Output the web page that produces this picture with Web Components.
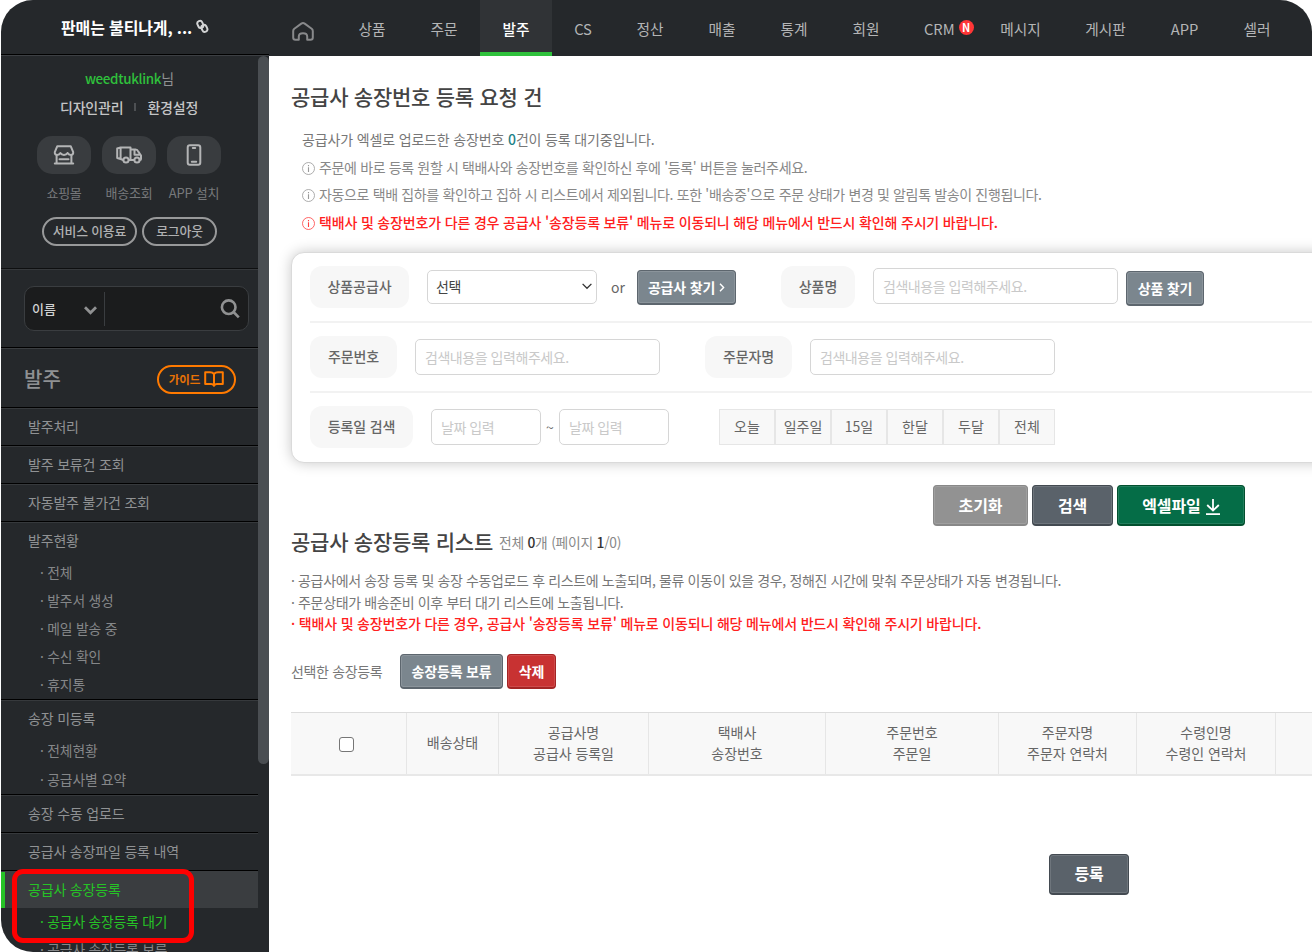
<!DOCTYPE html>
<html lang="ko">
<head>
<meta charset="utf-8">
<title>공급사 송장등록 대기</title>
<style>
  html, body { margin: 0; height: 952px; overflow: hidden; background: #fff; }
  body { font: 14px/20px "Noto Sans CJK KR", "Noto Sans KR", sans-serif; color: #666; }
</style>
</head>
<body>
<admin-shell>
  <side-header slot="brand">판매는 불티나게, ...</side-header>
  <top-nav slot="nav">
    <nav-item style="width:72px">상품</nav-item>
    <nav-item style="width:72px">주문</nav-item>
    <nav-item style="width:72px" active>발주</nav-item>
    <nav-item style="width:62px">CS</nav-item>
    <nav-item style="width:72px">정산</nav-item>
    <nav-item style="width:72px">매출</nav-item>
    <nav-item style="width:72px">통계</nav-item>
    <nav-item style="width:72px">회원</nav-item>
    <nav-item style="width:76px" badge="N">CRM</nav-item>
    <nav-item style="width:85px">메시지</nav-item>
    <nav-item style="width:85px">게시판</nav-item>
    <nav-item style="width:73px">APP</nav-item>
    <nav-item style="width:72px">셀러</nav-item>
  </top-nav>

  <side-bar slot="side">
    <user-panel slot="user" name="weedtuklink"></user-panel>
    <side-search slot="search">이름</side-search>
    <side-title slot="title">발주</side-title>
    <menu-group label="발주처리"></menu-group>
    <menu-group label="발주 보류건 조회"></menu-group>
    <menu-group label="자동발주 불가건 조회"></menu-group>
    <menu-group label="발주현황">
      <menu-link>전체</menu-link>
      <menu-link>발주서 생성</menu-link>
      <menu-link>메일 발송 중</menu-link>
      <menu-link>수신 확인</menu-link>
      <menu-link>휴지통</menu-link>
    </menu-group>
    <menu-group label="송장 미등록" style="--row:28.5px">
      <menu-link>전체현황</menu-link>
      <menu-link>공급사별 요약</menu-link>
    </menu-group>
    <menu-group label="송장 수동 업로드"></menu-group>
    <menu-group label="공급사 송장파일 등록 내역"></menu-group>
    <menu-group label="공급사 송장등록" active>
      <menu-link active>공급사 송장등록 대기</menu-link>
      <menu-link>공급사 송장등록 보류</menu-link>
    </menu-group>
  </side-bar>

  <request-intro></request-intro>
  <search-panel></search-panel>
  <list-section></list-section>
</admin-shell>

<script>
// small base class: every element renders its own html() into an open root
class BaseElement extends HTMLElement {
  connectedCallback() {
    if (this.shadowRoot) return;
    this.attachShadow({ mode: 'open' });
    this.shadowRoot.innerHTML = this.html();
  }
  html() { return '<slot></slot>'; }
}

class AdminShell extends BaseElement {
  html() {
    return `
      <style>
        :host { display: grid; grid-template: 56px 896px / 268px 1043px; width: 1311px; height: 952px;
          margin-left: 1px; overflow: hidden; position: relative; border-radius: 32px 32px 0 32px; background: #fff; }
        main { padding: 0 0 0 22px; overflow: hidden; min-width: 0; }
        .mark { position: absolute; left: 11px; top: 869px; width: 172px; height: 64px;
          border: 5px solid #fe0000; border-radius: 11px; }
      </style>
      <slot name="brand"></slot>
      <slot name="nav"></slot>
      <slot name="side"></slot>
      <main><slot></slot></main>
      <div class="mark"></div>
    `;
  }
}

class SideHeader extends BaseElement {
  html() {
    return `
      <style>
        :host { display: flex; box-sizing: border-box; height: 56px; padding: 0 0 2px 60px; align-items: center;
          gap: 4px; background: #25282b; border-bottom: 1px solid #3c3f43; box-shadow: inset 0 -1px #000;
          color: #fff; font-size: 16px; letter-spacing: -.14px; font-weight: 700; white-space: nowrap; }
      </style>
      <span><slot></slot></span>
      <svg width="13" height="15" viewBox="0 0 14 16" fill="none" stroke="#d2d3d4" stroke-width="2.1">
        <rect x="2" y="1.8" width="5.6" height="7.8" rx="2.8" transform="rotate(-25 5 6)"/>
        <rect x="6" y="6" width="5.6" height="7.8" rx="2.8" transform="rotate(-25 9 9.5)"/>
      </svg>
    `;
  }
}

class TopNav extends BaseElement {
  html() {
    return `
      <style>
        :host { display: flex; height: 56px; background: #25282b; }
        .home { width: 67px; display: flex; align-items: center; padding-top: 6px; box-sizing: border-box; padding-left: 23px; }
      </style>
      <div class="home">
        <svg width="22" height="19" viewBox="0 0 22 19" fill="none" stroke="#88898b" stroke-width="2" stroke-linejoin="round">
          <path d="M1.2 9 Q1.2 7.6 2.3 6.7 L9.3 1.6 Q11 .5 12.7 1.6 L19.7 6.7 Q20.8 7.6 20.8 9 V15.6 Q20.8 17.8 18.6 17.8 H15.2 V14.6 Q15.2 11.2 11 11.2 Q6.8 11.2 6.8 14.6 V17.8 H3.4 Q1.2 17.8 1.2 15.6Z"/>
        </svg>
      </div>
      <slot></slot>
    `;
  }
}

class NavItem extends BaseElement {
  html() {
    const badge = this.getAttribute('badge');
    return `
      <style>
        :host { display: flex; box-sizing: border-box; height: 56px; padding-top: 1px; align-items: center; justify-content: center;
          font-size: 14.7px; color: #b4b5b6; white-space: nowrap; }
        :host([active]) { background: #303336; color: #fff; font-weight: 500; border-bottom: 4px solid #2fc13c; padding-top: 5px; }
        :host([badge]) { justify-content: flex-start; padding-left: 22px; }
        b { width: 15px; height: 15px; border-radius: 50%; background: #ff3636; color: #fff; margin: -3px 0 0 4px;
          font: 700 11px/15px "Noto Sans CJK KR", sans-serif; text-align: center; }
      </style>
      <slot></slot>${badge ? `<b>${badge}</b>` : ''}
    `;
  }
}

class SideBar extends BaseElement {
  html() {
    return `
      <style>
        :host { display: grid; grid-template-columns: 257px 11px; height: 896px; background: #25282b; overflow: hidden; color: #909294; }
        .thumb { height: 708px; border-radius: 6px; background: #4a4e52; }
      </style>
      <div>
        <slot name="user"></slot>
        <slot name="search"></slot>
        <slot name="title"></slot>
        <slot></slot>
      </div>
      <div class="thumb"></div>
    `;
  }
}

class UserPanel extends BaseElement {
  html() {
    return `
      <style>
        :host { display: block; box-sizing: border-box; height: 213px; padding-top: 12px; border-bottom: 1px solid #0e0f10; white-space: nowrap; }
        .name { text-align: center; } .name b { font-weight: 500; color: #2fc13c; font-size: 13.4px; letter-spacing: -.32px; }
        .links { display: flex; align-items: center; gap: 11px; padding: 9px 0 0 59px; color: #c4c5c6; letter-spacing: -.2px; font-weight: 500; }
        .links i { width: 2px; height: 8px; background: #4d5053; }
        .tiles { display: flex; gap: 11px; padding: 19px 0 0 36px; font-size: 13px; letter-spacing: -.25px; color: #77797b; }
        .tile { width: 54px; text-align: center; }
        .tile div { height: 38px; border-radius: 15px; background: #393c3f; display: flex; align-items: center; justify-content: center; margin-bottom: 9px; }
        .tile span { margin: 0 -10px; }
        .acts { display: flex; gap: 5px; padding: 14px 0 0 41px; font-size: 12.9px; letter-spacing: -.2px; color: #b0b1b2; font-weight: 500; }
        .acts span { box-sizing: border-box; height: 29px; line-height: 24px; border: 2px solid #98999a; border-radius: 15px; width: 95px; text-align: center; }
        .acts span + span { width: 75px; }
        svg { fill: none; stroke: #b4b5b6; stroke-width: 2; stroke-linejoin: round; stroke-linecap: round; }
      </style>
      <div class="name"><b>${this.getAttribute('name')}</b>님</div>
      <div class="links"><span>디자인관리</span><i></i><span>환경설정</span></div>
      <div class="tiles">
        <div class="tile"><div>
          <svg width="22" height="20" viewBox="0 0 22 20"><path d="M4.3 1.2 H17.7 L20.2 7.2 Q20.4 9.9 17.8 9.9 Q15.5 9.9 14.6 8 Q13.4 9.9 11 9.9 Q8.6 9.9 7.4 8 Q6.5 9.9 4.2 9.9 Q1.6 9.9 1.8 7.2Z M3.6 10.5 V18 M18.4 10.5 V18 M1.8 18.4 H20.2 M6.5 14.2 H15.5"/></svg>
        </div><span>쇼핑몰</span></div>
        <div class="tile"><div>
          <svg width="26" height="18" viewBox="0 0 26 18"><path d="M4.6 1.5 H14.5 V14 H12.8 M7.2 14 L4.6 13 V1.5 L1.2 2.5 V12 L4.6 13 M14.5 3.6 H19.5 Q21.5 3.6 22.3 5.6 L25 9.5 V13 Q25 14 24 14 H23.6 M18 14 H14.5 M18.5 4.5 V8.7 H23.5"/><circle cx="10" cy="14" r="2.6"/><circle cx="21" cy="14" r="2.6"/></svg>
        </div><span>배송조회</span></div>
        <div class="tile"><div>
          <svg width="16" height="22" viewBox="0 0 16 22"><rect x="1.7" y="1.2" width="12.6" height="19.6" rx="2.2"/><path d="M6.8 4 H9.2 M5.8 17.8 H10.2"/></svg>
        </div><span>APP 설치</span></div>
      </div>
      <div class="acts"><span>서비스 이용료</span><span>로그아웃</span></div>
    `;
  }
}

class SideSearch extends BaseElement {
  html() {
    return `
      <style>
        :host { display: block; box-sizing: border-box; height: 79px; border-top: 1px solid #36393c; border-bottom: 1px solid #000; padding: 16px 0 0 23px; }
        .box { box-sizing: border-box; width: 225px; height: 45px; border: 1px solid #3a3d40; border-radius: 10px; background: #1b1c1d;
          display: flex; align-items: center; color: #d0d1d2; font-size: 13px; font-weight: 500; }
        .sel { width: 80px; height: 34px; box-sizing: border-box; padding: 0 7px 0 7px; display: flex; align-items: center;
          justify-content: space-between; border-right: 1px solid #3a3d40; }
        .sel svg { margin-top: 3px; }
        .find { margin-left: auto; margin-right: 8px; }
        svg { display: block; fill: none; stroke: #909192; }
      </style>
      <div class="box">
        <div class="sel"><span><slot></slot></span>
          <svg width="13" height="9" viewBox="0 0 13 9" stroke-width="2.8"><path d="M1 1.3 L6.5 6.8 L12 1.3"/></svg></div>
        <svg class="find" width="20" height="20" viewBox="0 0 20 20" stroke-width="2.6"><circle cx="8.7" cy="8.2" r="6.8"/><path d="M13.5 13 L18.8 18.3"/></svg>
      </div>
    `;
  }
}

class SideTitle extends BaseElement {
  html() {
    return `
      <style>
        :host { display: flex; box-sizing: border-box; height: 60px; border-top: 1px solid #3a3d40; border-bottom: 1px solid #000;
          align-items: center; justify-content: space-between; padding: 2px 22px 0 23px; font-size: 20px; font-weight: 500; color: #8f9193; }
        .guide { box-sizing: border-box; width: 79px; height: 29px; border: 2px solid #ff7a00; border-radius: 15px; display: flex; align-items: center;
          justify-content: center; gap: 4px; padding-bottom: 1px; color: #e87205; font-size: 11.5px; font-weight: 700; }
        svg { margin-top: 1px; }
      </style>
      <span><slot></slot></span>
      <div class="guide">가이드
        <svg width="20" height="16" viewBox="0 0 20 16" fill="none" stroke="#ff7a00" stroke-width="2" stroke-linejoin="round">
          <path d="M10 3 Q8.5 1.3 6 1.3 H1.2 V13 H7 Q9.2 13 10 14.8 Q10.8 13 13 13 H18.8 V1.3 H14 Q11.5 1.3 10 3 V14"/></svg>
      </div>
    `;
  }
}

class MenuGroup extends BaseElement {
  html() {
    return `
      <style>
        :host { display: block; border-top: 1px solid #36393c; border-bottom: 1px solid #000; }
        .label { height: 36px; line-height: 35px; padding-left: 27px; letter-spacing: -.18px; }
        :host([active]) { border-top-color: #3a3d40; }
        :host([active]) .label { background: #3a3d40; color: #26c326; border-left: 4px solid #26c326; padding-left: 23px; }
      </style>
      <div class="label">${this.getAttribute('label')}</div>
      <slot></slot>
    `;
  }
}

class MenuLink extends BaseElement {
  html() {
    return `
      <style>
        :host { display: block; height: var(--row, 28px); line-height: 26px; padding-left: 39px; font-size: 13.8px; letter-spacing: -.18px; color: #858789; }
        :host([active]) { color: #26c326; }
      </style>
      · <slot></slot>
    `;
  }
}

const infoIcon = '<svg viewBox="0 0 13 13"><circle cx="6.5" cy="6.5" r="6" stroke-width=".8"/><path d="M6.5 5.3 V10 M6.5 3 V4.2" stroke-width="1.1"/></svg>';

class RequestIntro extends BaseElement {
  html() {
    return `
      <style>
        :host { display: block; height: 196px; white-space: nowrap; }
        h1 { margin: 0; padding: 25px 0 0; font-size: 21px; line-height: 31px; font-weight: 500; color: #444; letter-spacing: -.25px; }
        p { margin: 0 0 0 11px; line-height: 27.6px; color: #888; letter-spacing: -.355px; }
        .lead { padding-top: 14px; color: #777; letter-spacing: -.15px; }
        .lead b { color: #1f8288; font-weight: 500; }
        .warn { color: #ff2020; font-weight: 500; letter-spacing: -.165px; }
        svg { width: 13px; height: 13px; margin-right: 4px; vertical-align: -2px; fill: none; stroke: currentColor; opacity: .85; }
      </style>
      <h1>공급사 송장번호 등록 요청 건</h1>
      <p class="lead">공급사가 엑셀로 업로드한 송장번호 <b>0</b>건이 등록 대기중입니다.</p>
      <p>${infoIcon}주문에 바로 등록 원할 시 택배사와 송장번호를 확인하신 후에 '등록' 버튼을 눌러주세요.</p>
      <p>${infoIcon}자동으로 택배 집하를 확인하고 집하 시 리스트에서 제외됩니다. 또한 '배송중'으로 주문 상태가 변경 및 알림톡 발송이 진행됩니다.</p>
      <p class="warn">${infoIcon}택배사 및 송장번호가 다른 경우 공급사 '송장등록 보류' 메뉴로 이동되니 해당 메뉴에서 반드시 확인해 주시기 바랍니다.</p>
    `;
  }
}

class FieldLabel extends BaseElement {
  html() {
    return `
      <style>
        :host { box-sizing: border-box; height: 42px; line-height: 41px; border-radius: 12px; background: #f7f7f7; text-align: center;
          font-weight: 500; letter-spacing: -.1px; color: #666; }
      </style>
      <slot></slot>
    `;
  }
}

class TextField extends BaseElement {
  html() {
    return `
      <style>
        :host { display: block; box-sizing: border-box; width: 245px; height: 36px; line-height: 35px; padding-left: 9px;
          border: 1px solid #d6d6d6; border-radius: 5px; background: #fff; color: #c9c9c9; letter-spacing: -.45px; }
        :host([select]) { display: flex; align-items: center; justify-content: space-between; width: 170px; height: 34px;
          padding: 0 4px 2px 8px; color: #444; }
      </style>
      <span><slot></slot></span>
      ${this.hasAttribute('select') ? '<svg width="10" height="7" viewBox="0 0 10 7" fill="none" stroke="#333" stroke-width="1.3"><path d="M.6 .9 L5 5.3 L9.4 .9"/></svg>' : ''}
    `;
  }
}

class UiButton extends BaseElement {
  html() {
    return `
      <style>
        :host { display: flex; box-sizing: border-box; height: 35px; align-items: center; justify-content: center;
          border: 1px solid var(--line, #5d666e); border-bottom-width: 2px; border-radius: 4px; background: var(--fill, #7b868e);
          box-shadow: inset 0 0 0 1px rgba(255,255,255,.12); color: #fff; font-weight: 700; letter-spacing: -.2px; white-space: nowrap; }
        :host([large]) { height: 41px; font-size: 16px; padding-bottom: 1px; letter-spacing: -.1px; }
        :host([dark]) { --fill: #5a626a; --line: #434a51; }
        :host([gray]) { --fill: #929292; --line: #888; }
        :host([green]) { --fill: #056d47; --line: #03502f; }
        :host([red]) { --fill: #c83232; --line: #a32424; }
      </style>
      <slot></slot>
    `;
  }
}

class SearchPanel extends BaseElement {
  html() {
    return `
      <style>
        :host { display: block; box-sizing: border-box; width: 1060px; height: 211px; border: 1px solid #dadada; border-radius: 13px;
          padding-left: 18px; box-shadow: 0 0 14px rgba(0,0,0,.22); background: #fff; }
        .row { display: flex; align-items: center; height: 68px; border-bottom: 2px solid #f2f2f2; }
        .row:last-child { border: 0; }
        .days { display: flex; margin-left: 50px; }
        .days span { box-sizing: border-box; width: 56px; height: 36px; line-height: 33px; text-align: center; border: 1px solid #e6e6e6; background: #f8f8f8; }
        field-label + text-field { margin-left: 18px; }
      </style>
      <div class="row">
        <field-label style="width:99px">상품공급사</field-label>
        <text-field select>선택</text-field>
        <span style="margin:0 12px 0 14px;width:14px">or</span>
        <ui-button style="width:99px">공급사 찾기<svg style="margin:2px 0 0 4px" width="6" height="9" viewBox="0 0 6 9" fill="none" stroke="#fff" stroke-width="1.4"><path d="M1 .8 L4.6 4.5 L1 8.2"/></svg></ui-button>
        <field-label style="width:74px;margin-left:45px">상품명</field-label>
        <text-field style="margin-bottom:2px">검색내용을 입력해주세요.</text-field>
        <ui-button style="width:78px;margin:2px 0 0 8px">상품 찾기</ui-button>
      </div>
      <div class="row">
        <field-label style="width:87px">주문번호</field-label>
        <text-field>검색내용을 입력해주세요.</text-field>
        <field-label style="width:87px;margin-left:45px">주문자명</field-label>
        <text-field>검색내용을 입력해주세요.</text-field>
      </div>
      <div class="row">
        <field-label style="width:103px">등록일 검색</field-label>
        <text-field style="width:110px">날짜 입력</text-field>
        <span style="width:18px;text-align:center">~</span>
        <text-field style="width:110px">날짜 입력</text-field>
        <div class="days"><span>오늘</span><span>일주일</span><span>15일</span><span>한달</span><span>두달</span><span>전체</span></div>
      </div>
    `;
  }
}

class ListSection extends BaseElement {
  html() {
    return `
      <style>
        :host { display: block; width: 1060px; white-space: nowrap; }
        .actions { display: flex; gap: 4px; padding: 22px 0 0 642px; }
        .head { display: flex; gap: 6px; height: 32px; line-height: 30px; color: #888; letter-spacing: -.25px; }
        .head span { line-height: 33px; font-size: 13.8px; }
        h2 { margin: 0; font-size: 21px; font-weight: 500; color: #444; }
        .head b { color: #333; font-weight: 500; }
        .notes { padding-top: 12px; line-height: 21.5px; color: #777; letter-spacing: -.365px; }
        .notes .warn { color: #ff2020; font-weight: 500; letter-spacing: -.17px; }
        .bulk { display: flex; align-items: center; gap: 4px; padding-top: 19px; color: #777; }
        .bulk span { width: 105px; letter-spacing: -.35px; }
        .cols { display: grid; grid-template-columns: 116px 92px 150px 177px 173px 138px 139px 1fr; height: 61px; margin-top: 23px;
          border-top: 1px solid #dcdcdc; border-bottom: 2px solid #e8e8e8; background: #f8f8f8; line-height: 21.5px; color: #666; letter-spacing: -.05px; }
        .cols div { border-right: 1px solid #e6e6e6; display: flex; align-items: center; justify-content: center; text-align: center; }
        .cols i { box-sizing: border-box; width: 15px; height: 15px; margin: 3px 5px 0 0; border: 1px solid #767676; border-radius: 3px; background: #fff; }
        .submit { width: 80px; margin: 78px 0 0 758px; }
      </style>
      <div class="actions">
        <ui-button large gray style="width:95px">초기화</ui-button>
        <ui-button large dark style="width:81px">검색</ui-button>
        <ui-button large green style="width:128px">엑셀파일<svg style="margin:6px 0 0 5px" width="14" height="17" viewBox="0 0 14 17" fill="none" stroke="#fff" stroke-width="1.8"><path d="M7 0 V11.5 M1.2 6 L7 11.6 L12.8 6 M0 15.2 H14"/></svg></ui-button>
      </div>
      <div class="head"><h2>공급사 송장등록 리스트</h2><span>전체 <b>0</b>개 (페이지 <b>1</b>/0)</span></div>
      <div class="notes">
        <div>· 공급사에서 송장 등록 및 송장 수동업로드 후 리스트에 노출되며, 물류 이동이 있을 경우, 정해진 시간에 맞춰 주문상태가 자동 변경됩니다.</div>
        <div>· 주문상태가 배송준비 이후 부터 대기 리스트에 노출됩니다.</div>
        <div class="warn">· 택배사 및 송장번호가 다른 경우, 공급사 '송장등록 보류' 메뉴로 이동되니 해당 메뉴에서 반드시 확인해 주시기 바랍니다.</div>
      </div>
      <div class="bulk"><span>선택한 송장등록</span>
        <ui-button style="width:103px">송장등록 보류</ui-button>
        <ui-button red style="width:49px">삭제</ui-button>
      </div>
      <div class="cols">
        <div><i></i></div><div>배송상태</div><div>공급사명<br>공급사 등록일</div><div>택배사<br>송장번호</div>
        <div>주문번호<br>주문일</div><div>주문자명<br>주문자 연락처</div><div>수령인명<br>수령인 연락처</div><div></div>
      </div>
      <ui-button class="submit" large dark>등록</ui-button>
    `;
  }
}

customElements.define('admin-shell', AdminShell);
customElements.define('side-header', SideHeader);
customElements.define('top-nav', TopNav);
customElements.define('nav-item', NavItem);
customElements.define('side-bar', SideBar);
customElements.define('user-panel', UserPanel);
customElements.define('side-search', SideSearch);
customElements.define('side-title', SideTitle);
customElements.define('menu-group', MenuGroup);
customElements.define('menu-link', MenuLink);
customElements.define('request-intro', RequestIntro);
customElements.define('field-label', FieldLabel);
customElements.define('text-field', TextField);
customElements.define('ui-button', UiButton);
customElements.define('search-panel', SearchPanel);
customElements.define('list-section', ListSection);
</script>
</body>
</html>
